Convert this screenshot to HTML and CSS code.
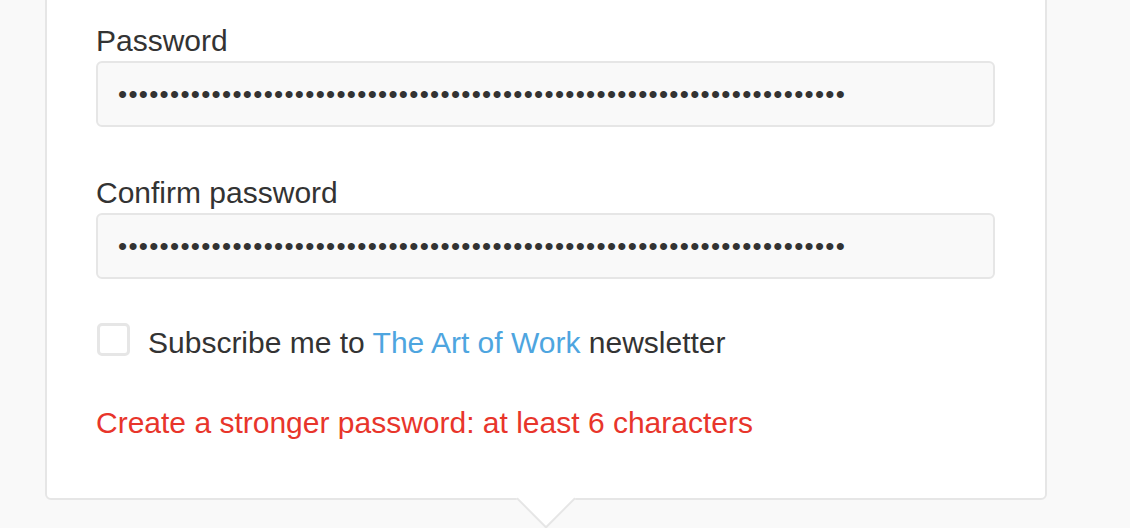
FILE: index.html
```html
<!DOCTYPE html>
<html lang="en">
<head>
    <meta charset="UTF-8">
    <meta name="viewport" content="width=device-width, initial-scale=1.0">
    <title>Sign up</title>
    <link rel="stylesheet" href="styles.css">
</head>
<body>
    <div class="signup-card">
        <!-- 密码 -->
        <div class="field">
            <label class="field-label" for="password">Password</label>
            <input class="field-input" id="password" type="password" value="aaaaaaaaaaaaaaaaaaaaaaaaaaaaaaaaaaaaaaaaaaaaaaaaaaaaaaaaaaaaaaaaaaaaaa" />
        </div>

        <div class="field">
            <label class="field-label" for="confirm">Confirm password</label>
            <input class="field-input" id="confirm" type="password" value="aaaaaaaaaaaaaaaaaaaaaaaaaaaaaaaaaaaaaaaaaaaaaaaaaaaaaaaaaaaaaaaaaaaaaa" />
        </div>

        <!-- 订阅 -->
        <label class="subscribe">
            <input type="checkbox" class="subscribe-box" />
            <span class="subscribe-text">Subscribe me to <a href="#">The Art of Work</a> newsletter</span>
        </label>

        <p class="form-error">Create a stronger password: at least 6 characters</p>
    </div>
</body>
</html>
```

FILE: styles.css
```css
:root {
    --bg-page: #f9f9f9;
    --bg-card: #fff;
    --bg-input: #f9f9f9;
    --border-color: #e6e6e6;
    --text-primary: #333;
    --link-color: #4ea5df;
    --error-color: #e8352b;
}

body {
    margin: 0;
    padding: 0 0 40px;
    background: var(--bg-page);
    color: var(--text-primary);
    font-family: "Liberation Sans", Arial, sans-serif;
    font-size: 30px;
    line-height: 36px;
}

/* 卡片 */
.signup-card {
    position: relative;
    box-sizing: border-box;
    width: 1002px;
    margin: -10px 0 0 45px;
    padding: 31px 50px 57px 49px;
    background: var(--bg-card);
    border: 2px solid var(--border-color);
    border-radius: 6px;
}

/* 底部小箭头 */
.signup-card::after {
    content: "";
    position: absolute;
    left: 50%;
    bottom: -22px;
    width: 40px;
    height: 40px;
    margin-left: -21px;
    background: var(--bg-card);
    border-right: 2px solid var(--border-color);
    border-bottom: 2px solid var(--border-color);
    transform: rotate(45deg);
}

.field {
    display: flex;
    flex-direction: column;
    gap: 2px;
    margin-bottom: 48px;
}

.field:last-of-type {
    margin-bottom: 44px;
}

.field-label {
    display: block;
}

.field-input {
    box-sizing: border-box;
    width: 100%;
    height: 66px;
    padding: 0 20px;
    background: var(--bg-input);
    border: 2px solid var(--border-color);
    border-radius: 6px;
    color: var(--text-primary);
    font-family: inherit;
    font-size: 26px;
    letter-spacing: 1.3px;
    outline: none;
}

/* 订阅复选框 */
.subscribe {
    display: flex;
    align-items: flex-start;
    gap: 18px;
    cursor: pointer;
}

.subscribe-box {
    appearance: none;
    box-sizing: border-box;
    flex: none;
    width: 33px;
    height: 33px;
    margin: 0 0 0 1px;
    background: #fff;
    border: 3px solid var(--border-color);
    border-radius: 5px;
}

.subscribe-text {
    margin-top: 2px;
}

.subscribe-text a {
    color: var(--link-color);
    text-decoration: none;
}

.form-error {
    margin: 44px 0 0;
    color: var(--error-color);
}
```
